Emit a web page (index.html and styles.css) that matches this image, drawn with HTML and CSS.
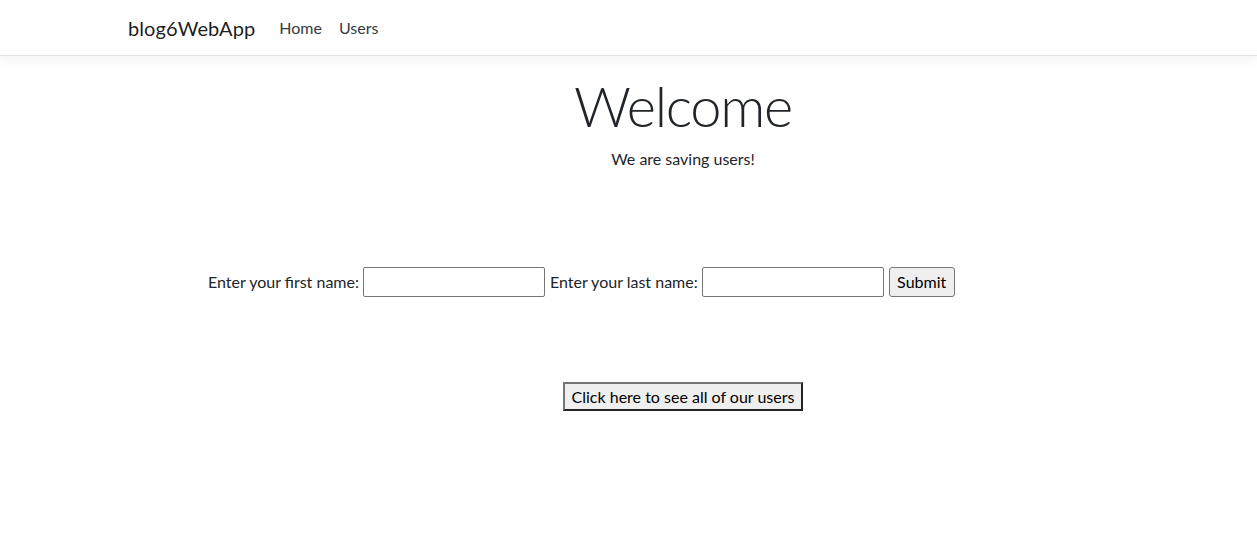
FILE: index.html
```html
<!DOCTYPE html>
<html lang="en">
<head>
<meta charset="utf-8">
<title>blog6WebApp</title>
<link rel="stylesheet" href="styles.css">
</head>
<body>
<header>
  <nav class="navbar">
    <div class="container nav-inner">
      <a class="brand" href="#">blog6WebApp</a>
      <ul class="nav-list">
        <li><a class="nav-link" href="#">Home</a></li>
        <li><a class="nav-link" href="#">Users</a></li>
      </ul>
    </div>
  </nav>
</header>
<div class="container">
  <main class="main">
    <div class="hero">
      <h1 class="display">Welcome</h1>
      <p class="lead-text">We are saving users!</p>
    </div>
    <form class="user-form">
      <label class="field-label" for="first">Enter your first name:</label>
      <input class="text-input" id="first" type="text">
      <label class="field-label" for="last">Enter your last name:</label>
      <input class="text-input" id="last" type="text">
      <button class="submit-btn" type="button">Submit</button>
    </form>
    <div class="see-all">
      <button class="see-all-btn" type="button">Click here to see all of our users</button>
    </div>
  </main>
</div>
</body>
</html>
```
FILE: styles.css
```css
html, body {
  margin: 0;
  padding: 0;
}
body {
  font-family: "Lato", "Liberation Sans", sans-serif;
  font-size: 16px;
  line-height: 1.5;
  color: #212529;
  background: #fff;
  overflow: hidden;
}
.container {
  width: 1140px;
  box-sizing: border-box;
  margin-left: 113px;
  padding: 0 15px;
}
.navbar {
  background: #fff;
  border-bottom: 1px solid #dee2e6;
  box-shadow: 0 4px 12px rgba(0, 0, 0, 0.05);
  padding: 8px 0;
  margin-bottom: 16px;
}
.nav-inner {
  display: flex;
  align-items: center;
  height: 39px;
}
.brand {
  font-size: 20px;
  color: rgba(0, 0, 0, 0.9);
  text-decoration: none;
  margin-right: 16px;
  letter-spacing: 0.1px;
}
.nav-list {
  display: flex;
  gap: 1px;
  list-style: none;
  margin: 0;
  padding: 0;
}
.nav-link {
  display: block;
  padding: 8px;
  color: #343a40;
  text-decoration: none;
}
.hero {
  text-align: center;
}
.display {
  font-size: 56px;
  font-weight: 300;
  line-height: 1.2;
  letter-spacing: -1.3px;
  margin: 0 0 8px;
}
.lead-text {
  margin: 0;
}
.user-form {
  display: flex;
  align-items: center;
  gap: 4px;
  margin-top: 96px;
  padding-left: 80px;
}
.text-input {
  box-sizing: border-box;
  width: 182px;
  height: 30px;
  border: 1px solid #767676;
  border-radius: 2px;
  padding: 1px 2px;
  font: inherit;
  background: #fff;
}
.field-label + .text-input {
  margin-right: 1px;
}
.submit-btn {
  box-sizing: border-box;
  height: 30px;
  width: 66px;
  padding: 1px 6px;
  border: 1px solid #767676;
  border-radius: 3px;
  background: #efefef;
  color: #000;
  font: inherit;
}
.see-all {
  text-align: center;
  margin-top: 85px;
}
.see-all-btn {
  box-sizing: border-box;
  height: 29px;
  width: 240px;
  padding: 1px 6px;
  border: 2px solid;
  border-color: #767676 #222 #222 #767676;
  background: #efefef;
  color: #000;
  font: inherit;
}
```
